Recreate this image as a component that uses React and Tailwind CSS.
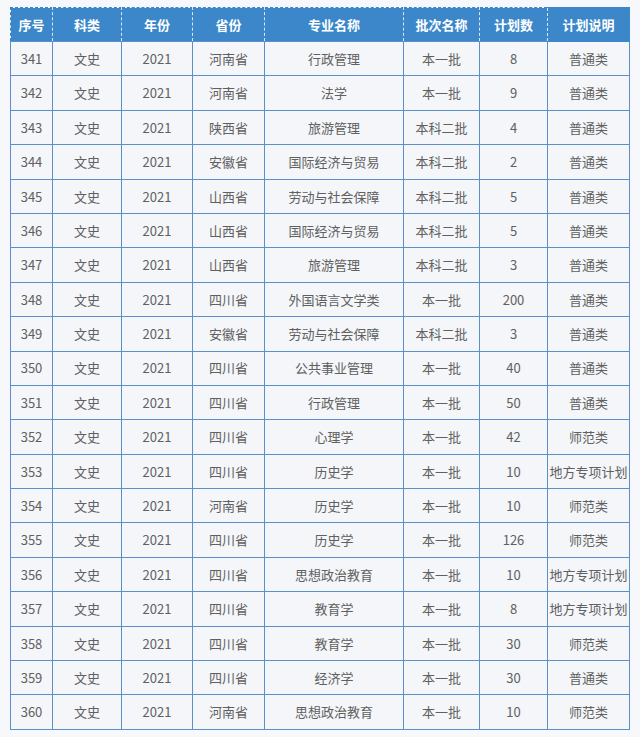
import React from "react";

const headers = ["序号", "科类", "年份", "省份", "专业名称", "批次名称", "计划数", "计划说明"];
const widths = ["w-[42px]", "w-[69px]", "w-[71px]", "w-[72px]", "w-[139px]", "w-[76px]", "w-[68px]", "w-[82px]"];

const rows = [
  ["341", "河南省", "行政管理", "本一批", "8", "普通类"],
  ["342", "河南省", "法学", "本一批", "9", "普通类"],
  ["343", "陕西省", "旅游管理", "本科二批", "4", "普通类"],
  ["344", "安徽省", "国际经济与贸易", "本科二批", "2", "普通类"],
  ["345", "山西省", "劳动与社会保障", "本科二批", "5", "普通类"],
  ["346", "山西省", "国际经济与贸易", "本科二批", "5", "普通类"],
  ["347", "山西省", "旅游管理", "本科二批", "3", "普通类"],
  ["348", "四川省", "外国语言文学类", "本一批", "200", "普通类"],
  ["349", "安徽省", "劳动与社会保障", "本科二批", "3", "普通类"],
  ["350", "四川省", "公共事业管理", "本一批", "40", "普通类"],
  ["351", "四川省", "行政管理", "本一批", "50", "普通类"],
  ["352", "四川省", "心理学", "本一批", "42", "师范类"],
  ["353", "四川省", "历史学", "本一批", "10", "地方专项计划"],
  ["354", "河南省", "历史学", "本一批", "10", "师范类"],
  ["355", "四川省", "历史学", "本一批", "126", "师范类"],
  ["356", "四川省", "思想政治教育", "本一批", "10", "地方专项计划"],
  ["357", "四川省", "教育学", "本一批", "8", "地方专项计划"],
  ["358", "四川省", "教育学", "本一批", "30", "师范类"],
  ["359", "四川省", "经济学", "本一批", "30", "普通类"],
  ["360", "河南省", "思想政治教育", "本一批", "10", "师范类"],
];

export default function App() {
  return (
    <div className="min-h-[737px] w-[640px] bg-[#f7f8fb] pt-[7px] pl-[10px] font-['Noto_Sans_CJK_SC','Liberation_Sans',sans-serif]">
      <table className="table-fixed border-collapse w-[619px] text-[13px]">
        <thead>
          <tr className="bg-[#3b87c9] text-white">
            {headers.map((h, i) => (
              <th
                key={h}
                className={`${widths[i]} h-[34px] p-0 text-center font-bold border-y border-[#3b87c9] ${
                  i === 0 ? "border-l" : ""
                } ${i === headers.length - 1 ? "border-r border-r-[#3b87c9]" : "border-r border-dashed border-r-white/80"}`}
              >
                {h}
              </th>
            ))}
          </tr>
        </thead>
        <tbody className="bg-[#f4f6f9] text-[#606060]">
          {rows.map((r) => {
            const cells = [r[0], "文史", "2021", r[1], r[2], r[3], r[4], r[5]];
            return (
              <tr key={r[0]}>
                {cells.map((c, i) => (
                  <td
                    key={i}
                    className="h-[34.4px] p-0 text-center border border-[#5b8fc7] whitespace-nowrap"
                  >
                    {c}
                  </td>
                ))}
              </tr>
            );
          })}
        </tbody>
      </table>
    </div>
  );
}
